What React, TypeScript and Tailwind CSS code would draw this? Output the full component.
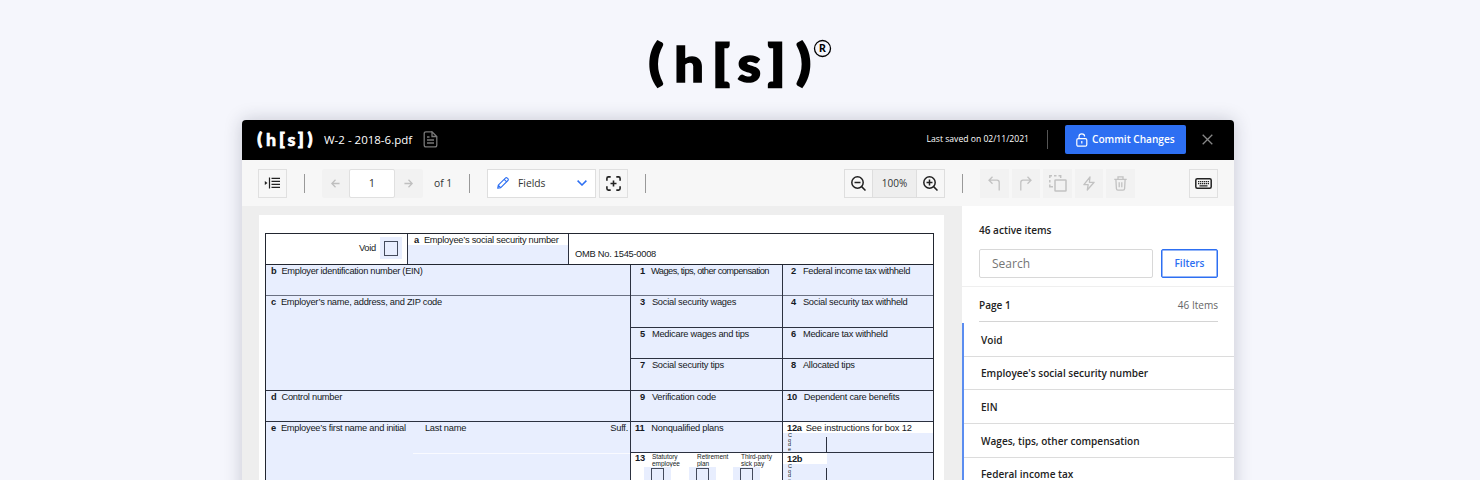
import type { ReactNode } from 'react';

function Logo({ className }: { className: string }) {
  return (
    <svg viewBox="-10 -20 182 88" className={className} fill="currentColor" stroke="currentColor" strokeLinejoin="miter" fontFamily="Lato" fontWeight="900" textAnchor="middle" aria-label="(h[s])">
      <text fontSize="48" strokeWidth="2.2" transform="translate(7.200 38.800) scale(1.1 1)">(</text>
      <text fontSize="48" strokeWidth="1.400" transform="translate(40 42.400) scale(1.09 1)">h</text>
      <text fontSize="48" strokeWidth="2.6" transform="translate(72 38.800) scale(1.12 1)">[</text>
      <text fontSize="50" strokeWidth="1.600" transform="translate(100.200 42.400) scale(1.06 1)">s</text>
      <text fontSize="48" strokeWidth="2.6" transform="translate(127.500 38.800) scale(1.12 1)">]</text>
      <text fontSize="48" strokeWidth="2.2" transform="translate(154.500 38.800) scale(1.1 1)">)</text>
    </svg>
  );
}

function Divider({ className }: { className: string }) {
  return <div className={`h-[19px] w-px shrink-0 bg-[#999] ${className}`} />;
}

function IconButton({ children, className = '' }: { children: ReactNode; className?: string }) {
  return (
    <button className={`flex h-[29px] w-[29px] shrink-0 items-center justify-center border border-[#e0e0e0] text-[#222] ${className}`}>
      {children}
    </button>
  );
}

function GhostButton({ children }: { children: ReactNode }) {
  return (
    <button className="flex h-[29px] w-[28.5px] shrink-0 items-center justify-center bg-[#f2f2f2] text-[#c2c2c2]">{children}</button>
  );
}

function Header() {
  return (
    <header className="flex h-10 items-center bg-black pr-[21px] pl-[12px] text-white">
      <Logo className="h-[30px] w-[62px]" />
      <span className="ml-[8px] w-[99px] text-[11.5px] whitespace-nowrap">W-2 - 2018-6.pdf</span>
      <svg className="mb-px h-[17px] w-[15px]" viewBox="0 0 15 17" fill="none" stroke="#777" strokeWidth="1.3">
        <path d="M9 .8H3Q1.2.8 1.2 2.6V14q0 1.9 1.8 1.9h9q1.8 0 1.8-1.9V5.5L9 .8V5.5h4.5M4 6h2.500M4 9h7M4 12h7" />
      </svg>
      <span className="mb-px ml-auto text-[8.600px] whitespace-nowrap">Last saved on 02/11/2021</span>
      <div className="mb-px ml-[18px] h-[19px] w-px bg-[#555]" />
      <button className="mb-[2px] ml-[17px] flex h-[29px] w-[121px] items-center rounded-[2px] bg-[#2d6ff2] pl-[11px] text-[10.100px] font-semibold whitespace-nowrap">
        <svg className="mt-px mr-[4px] h-[14px] w-[12px]" viewBox="0 0 12 14" fill="none" stroke="white" strokeWidth="1.2">
          <rect x=".8" y="5.600" width="10" height="7.600" rx="1.500" />
          <path d="M3 5.500V3.500Q3 .8 5.800.8T8.600 3.500M5.800 8v2.500" />
        </svg>
        <span className="mt-[2px]">Commit Changes</span>
      </button>
      <svg className="mb-px ml-4 h-[11px] w-[11px]" viewBox="0 0 11 11" stroke="#888" strokeWidth="1.3">
        <path d="M.7.7l9.600 9.600M10.300.7L.7 10.300" />
      </svg>
    </header>
  );
}

function Toolbar() {
  return (
    <div className="flex h-[46px] items-center bg-[#f7f7f7] pl-4 text-[#333]">
      <IconButton>
        <svg className="mr-px h-[12px] w-[16px]" viewBox="0 0 16 12" stroke="#222" fill="none">
          <path d="M5.500 .5v11" strokeWidth="1.200" />
          <path d="M7.500 1.400h8.500M7.500 4.400h8.500M7.500 7.400h8.500M7.500 10.400h8.500" strokeWidth="1.400" />
          <path d="M.8 4L3.500 6L.8 8z" fill="#222" stroke="none" />
        </svg>
      </IconButton>
      <Divider className="ml-[17px]" />
      <div className="ml-[17px] flex h-[29px] w-[101px] rounded-[2px] bg-[#f2f2f2] text-[#bfbfbf]">
        <div className="flex w-[27px] items-center justify-center">
          <svg className="h-[9px] w-[9px]" viewBox="0 0 10 10" fill="none" stroke="currentColor" strokeWidth="1.400"><path d="M9.500 5H1M5 .8L.9 5L5 9.200" /></svg>
        </div>
        <div className="flex w-[46px] items-center justify-center rounded-[2px] border border-[#e0e0e0] bg-white text-[11px] text-[#333]">1</div>
        <div className="flex w-[28px] items-center justify-center">
          <svg className="mr-px h-[9px] w-[9px]" viewBox="0 0 10 10" fill="none" stroke="currentColor" strokeWidth="1.400"><path d="M.5 5H9M5 .8L9.100 5L5 9.200" /></svg>
        </div>
      </div>
      <span className="mt-px ml-[11px] w-[20px] text-[10.300px] whitespace-nowrap">of 1</span>
      <Divider className="ml-[15px]" />
      <button className="ml-[17px] flex h-[29px] w-[109px] items-center border border-[#dedede] bg-white pl-[9px] text-[10.300px]">
        <svg className="h-3 w-3" viewBox="0 0 12 12" fill="none" stroke="#2d6ff2" strokeWidth="1.100" strokeLinejoin="round">
          <path d="M.7 11.300L1.300 8.200L8.400 1.100Q9.300.2 10.300 1.100L10.900 1.700Q11.800 2.600 10.900 3.500L3.800 10.600zM7.200 2.400L9.600 4.800M1.400 8.300L3.700 10.600" />
        </svg>
        <span className="mt-px ml-[9px]">Fields</span>
        <svg className="mr-[8px] ml-auto h-[6px] w-[10px]" viewBox="0 0 10 6" fill="none" stroke="#2d6ff2" strokeWidth="1.500"><path d="M.6.6L5 5L9.400.6" /></svg>
      </button>
      <IconButton className="ml-[3px]">
        <svg className="h-[15px] w-[15px]" viewBox="0 0 15 15" fill="none" stroke="#222" strokeWidth="1.600">
          <path d="M.9 4.700V2.400Q.9.9 2.400.9H4.700M10.300.9h2.300q1.500 0 1.500 1.500v2.300M14.100 10.300v2.300q0 1.500-1.500 1.500h-2.300M4.700 14.100H2.400Q.9 14.100.9 12.600v-2.300M7.500 4.500v6M4.500 7.500h6" />
        </svg>
      </IconButton>
      <Divider className="ml-[17px]" />
      <div className="ml-[198px] flex h-[29px] w-[101px] border border-[#dedede]">
        <div className="flex w-[28px] items-center justify-center border-r border-[#dedede]">
          <svg className="h-[15px] w-[15px]" viewBox="0 0 15 15" fill="none" stroke="#222" strokeWidth="1.500"><circle cx="6.500" cy="6.500" r="5.700" /><path d="M10.600 10.600L14.500 14.500M3.500 6.500h6" /></svg>
        </div>
        <div className="flex w-[44px] items-center justify-center border-r border-[#dedede] bg-[#eee] text-[10px]">100%</div>
        <div className="flex w-[27px] items-center justify-center">
          <svg className="h-[15px] w-[15px]" viewBox="0 0 15 15" fill="none" stroke="#222" strokeWidth="1.500"><circle cx="6.500" cy="6.500" r="5.700" /><path d="M10.600 10.600L14.500 14.500M3.500 6.500h6M6.500 3.500v6" /></svg>
        </div>
      </div>
      <Divider className="ml-[17px]" />
      <div className="ml-[17px] flex gap-[3px]">
        <GhostButton>
          <svg className="h-[15px] w-[12px]" viewBox="0 0 12 15" fill="none" stroke="currentColor" strokeWidth="1.300"><path d="M4.500.7L1 4.200l3.500 3.500M1 4.200h8q2.200 0 2.200 2.200V14.500" /></svg>
        </GhostButton>
        <GhostButton>
          <svg className="h-[15px] w-[12px]" viewBox="0 0 12 15" fill="none" stroke="currentColor" strokeWidth="1.300"><path d="M7.500.7L11 4.200L7.500 7.700M11 4.200H3Q.8 4.200.8 6.400V14.500" /></svg>
        </GhostButton>
        <GhostButton>
          <svg className="ml-px h-[17px] w-[18px]" viewBox="0 0 18 17" fill="none" stroke="currentColor" strokeWidth="1.500">
            <rect x="6" y="5" width="11" height="11" rx=".5" />
            <path d="M.8 3V.8H3M5 .8h2.500M9.500.8h2.200V3M.8 5v2.500M.8 9.500v2.200H4" />
          </svg>
        </GhostButton>
        <GhostButton>
          <svg className="h-[15px] w-[12px]" viewBox="0 0 12 15" fill="none" stroke="currentColor" strokeWidth="1.300" strokeLinejoin="round"><path d="M7 1L.9 8.700h4.300L4.300 14L11.100 6.300H6.400z" /></svg>
        </GhostButton>
        <GhostButton>
          <svg className="h-[15px] w-[13px]" viewBox="0 0 13 15" fill="none" stroke="currentColor" strokeWidth="1.300"><path d="M.3 3.400h12.400M4 3.200V.9h5v2.300M1.900 3.600l.5 9q.1 1.500 1.600 1.500h5q1.500 0 1.600-1.500l.5-9M5.200 6.200v5M7.800 6.200v5" /></svg>
        </GhostButton>
      </div>
      <IconButton className="ml-[54px]">
        <svg className="h-[11px] w-[17px]" viewBox="0 0 17 11" fill="none" stroke="#222">
          <rect x=".8" y=".8" width="15.400" height="9.400" rx="1.500" strokeWidth="1.500" />
          <path d="M3 3.600h11M3 5.600h11" strokeWidth="1.200" strokeDasharray="1.300 .64" />
          <path d="M4.500 7.800h8" strokeWidth="1.200" />
        </svg>
      </IconButton>
    </div>
  );
}

function Box({ n, label, gap = 'ml-[7px]', tracking = '', className = '' }: { n: string; label: string; gap?: string; tracking?: string; className?: string }) {
  return (
    <div className={`flex items-start whitespace-nowrap ${className}`}>
      <b>{n}</b>
      <span className={`${gap} ${tracking}`}>{label}</span>
    </div>
  );
}

function CodeBox({ id, note, band }: { id: string; note: string; band: string }) {
  return (
    <div className="flex h-[31px] shrink-0 flex-col border-b border-[#2c3140]">
      <div className={`flex h-[11px] shrink-0 bg-white pl-[4px] leading-[13px] whitespace-nowrap ${band}`}>
        <b>{id}</b>
        <span className="ml-[4px] tracking-[-0.15px]">{note}</span>
      </div>
      <div className="flex h-[19px] pl-[5px]">
        <div className="flex w-[38px] flex-col text-[5.500px] leading-[4.700px]">
          <span>C</span><span>o</span><span>d</span><span>e</span>
        </div>
        <div className="mt-auto h-[15px] w-px bg-[#2c3140]" />
      </div>
    </div>
  );
}

function CheckOption({ a, b, className }: { a: string; b: string; className: string }) {
  return (
    <div className={`flex shrink-0 flex-col text-[6.500px] leading-[7px] tracking-[-0.05px] whitespace-nowrap ${className}`}>
      <span>{a}</span>
      <span>{b}</span>
      <div className="ml-[-8px] flex h-[17px] w-[27px] justify-center bg-[#e8eefe] pt-px">
        <div className="h-4 w-[13px] border border-[#444b5c]" />
      </div>
    </div>
  );
}

function TaxForm() {
  return (
    <div className="flex h-[300px] w-[669px] flex-col border border-[#222630] bg-[#e8eefe] font-['Liberation_Sans',Arial,sans-serif] text-[9.300px] leading-[13px] tracking-[-0.25px] text-[#151923]">
      <div className="flex h-[31px] shrink-0 border-b border-[#222630] bg-white">
        <div className="flex w-[142px] items-center justify-end border-r border-[#2c3140] pr-[5px]">
          <span className="mr-[4px] mb-[2px]">Void</span>
          <div className="mt-[-2px] flex h-[22px] w-[22px] items-center justify-center bg-[#e8eefe]">
            <div className="h-[15px] w-[14px] border border-[#444b5c]" />
          </div>
        </div>
        <div className="w-[161px] border-r border-[#2c3140]">
          <div className="flex h-[11px] pl-[6px] leading-[12px] whitespace-nowrap"><b>a</b><span className="ml-[5px]">Employee’s social security number</span></div>
          <div className="h-[19px] bg-[#e8eefe]" />
        </div>
        <span className="mt-[14px] ml-[6px]">OMB No. 1545-0008</span>
      </div>
      <div className="flex grow">
        <div className="flex w-[365px] flex-col border-r border-[#2c3140]">
          <Box n="b" gap="ml-[5px]" tracking="tracking-[-0.3px]" label="Employer identification number (EIN)" className="h-[31px] border-b border-[#6a7082] pl-[5px]" />
          <Box n="c" gap="ml-[5px]" label="Employer’s name, address, and ZIP code" className="h-[95px] border-b border-[#2c3140] pl-[5px]" />
          <Box n="d" gap="ml-[5px]" label="Control number" className="h-[31px] border-b border-[#2c3140] pl-[5px]" />
          <div className="flex h-[31px] pl-[5px] whitespace-nowrap">
            <b>e</b>
            <span className="ml-[5px] w-[144px]">Employee’s first name and initial</span>
            <span>Last name</span>
            <span className="mr-[2px] ml-auto">Suff.</span>
          </div>
          <div className="ml-[147px] h-px shrink-0 bg-[#f9faff]" />
        </div>
        <div className="flex w-[152px] flex-col border-r border-[#2c3140]">
          <Box n="1" gap="ml-[6px]" tracking="tracking-[-0.55px]" label="Wages, tips, other compensation" className="h-[31px] border-b border-[#6a7082] pl-[9px]" />
          <Box n="3" label="Social security wages" className="h-[32px] border-b border-[#2c3140] pl-[9px]" />
          <Box n="5" label="Medicare wages and tips" className="h-[31px] border-b border-[#2c3140] pl-[9px]" />
          <Box n="7" label="Social security tips" className="h-[32px] border-b border-[#2c3140] pl-[9px]" />
          <Box n="9" label="Verification code" className="h-[31px] border-b border-[#2c3140] pl-[9px]" />
          <Box n="11" label="Nonqualified plans" className="h-[31px] border-b border-[#2c3140] pl-[4px]" />
          <div className="flex grow bg-white pl-[4px]">
            <b className="mt-[-1px] w-[17px]">13</b>
            <CheckOption a="Statutory" b="employee" className="w-[45px]" />
            <CheckOption a="Retirement" b="plan" className="w-[44px]" />
            <CheckOption a="Third-party" b="sick pay" className="w-[30px]" />
          </div>
        </div>
        <div className="flex w-[150px] flex-col">
          <Box n="2" tracking="tracking-[-0.32px]" label="Federal income tax withheld" className="h-[31px] border-b border-[#6a7082] pl-[8px]" />
          <Box n="4" label="Social security tax withheld" className="h-[32px] border-b border-[#2c3140] pl-[8px]" />
          <Box n="6" label="Medicare tax withheld" className="h-[31px] border-b border-[#2c3140] pl-[8px]" />
          <Box n="8" label="Allocated tips" className="h-[32px] border-b border-[#2c3140] pl-[8px]" />
          <Box n="10" label="Dependent care benefits" className="h-[31px] border-b border-[#2c3140] pl-[4px]" />
          <CodeBox id="12a" note="See instructions for box 12" band="w-[150px]" />
          <CodeBox id="12b" note="" band="w-[44px]" />
        </div>
      </div>
    </div>
  );
}

const items = ['Void', "Employee's social security number", 'EIN', 'Wages, tips, other compensation', 'Federal income tax'];

function SidePanel() {
  return (
    <aside className="flex w-[272px] flex-col bg-white text-[10.050px] text-[#222]">
      <div className="h-[81px] border-b border-[#efefef] pr-[16px] pl-[17px]">
        <div className="mt-[17px] h-[14px] leading-[14px] font-semibold">46 active items</div>
        <div className="mt-[12px] flex justify-between">
          <div className="flex h-[29px] w-[174px] items-center rounded-[2px] border border-[#d8d8d8] pl-[12px] text-[12px] text-[#757575]">Search</div>
          <button className="h-[29px] w-[57px] rounded-[2px] border border-[#2d6ff2] pt-px font-semibold text-[#2d6ff2] ring-[0.5px] ring-[#2d6ff2] ring-inset">Filters</button>
        </div>
      </div>
      <div className="mr-[16px] ml-[17px] flex h-[35px] shrink-0 items-center justify-between border-b border-[#d4d4d4] pt-[3px]">
        <span className="font-semibold">Page 1</span>
        <span className="text-[#666]">46 Items</span>
      </div>
      <div className="mt-px flex flex-col border-l-2 border-[#5b8df0]">
        {items.map((item) => (
          <div key={item} className="flex h-[33.700px] shrink-0 items-center border-b border-[#dcdcdc] pt-[1.500px] pl-[17px] font-semibold">{item}</div>
        ))}
      </div>
    </aside>
  );
}

export default function App() {
  return (
    <div className="flex h-[480px] w-[1480px] flex-col overflow-hidden bg-[#f5f6fc] font-['Open_Sans',sans-serif]">
      <div className="flex h-[120px] shrink-0 pt-5 pl-[639px] text-black">
        <Logo className="h-[88px] w-[182px]" />
        <svg className="mt-[19px] ml-[-9px] h-[20px] w-[20px]" viewBox="0 0 20 20">
          <circle cx="10.500" cy="9.500" r="8" fill="none" stroke="black" strokeWidth="1.300" />
          <text x="10.500" y="13.300" textAnchor="middle" fontFamily="Lato" fontWeight="900" fontSize="10.500">R</text>
        </svg>
      </div>
      <main className="ml-[242px] h-[400px] w-[992px] shrink-0 overflow-hidden rounded-t-[4px] shadow-[0_0_18px_rgba(30,35,60,0.22)]">
        <Header />
        <Toolbar />
        <div className="flex h-[314px]">
          <section className="w-[720px] bg-[#eee] pt-[9px] pl-[17px]">
            <div className="h-[340px] w-[685px] bg-white pt-[18px] pl-[6px]">
              <TaxForm />
            </div>
          </section>
          <SidePanel />
        </div>
      </main>
    </div>
  );
}
